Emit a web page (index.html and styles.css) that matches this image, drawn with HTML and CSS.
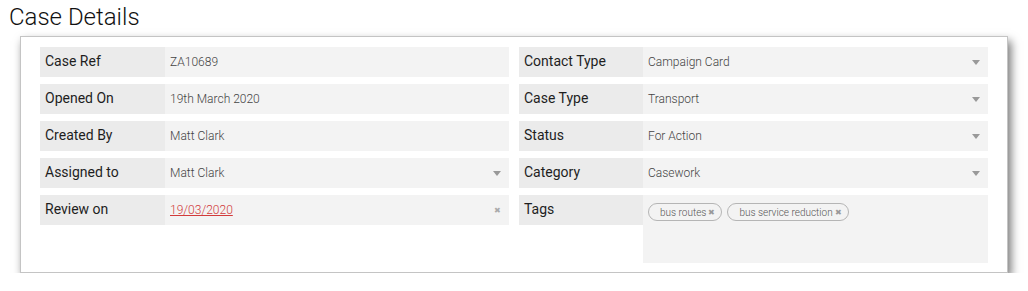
FILE: index.html
```html
<!DOCTYPE html>
<html lang="en">
<head>
    <meta charset="UTF-8">
    <title>Case Details</title>
    <link rel="stylesheet" href="styles.css">
</head>
<body>
    <h1 class="page-title">Case Details</h1>

    <div class="case-card">
        <div class="case-col">
            <div class="field">
                <div class="field-label">Case Ref</div>
                <div class="field-value">ZA10689</div>
            </div>
            <div class="field">
                <div class="field-label">Opened On</div>
                <div class="field-value">19th March 2020</div>
            </div>
            <div class="field">
                <div class="field-label">Created By</div>
                <div class="field-value">Matt Clark</div>
            </div>
            <div class="field">
                <div class="field-label">Assigned to</div>
                <div class="field-value select">Matt Clark <span class="caret"></span></div>
            </div>
            <div class="field">
                <div class="field-label">Review on</div>
                <div class="field-value select"><a class="date-link" href="#">19/03/2020</a> <span class="clear">&#10006;</span></div>
            </div>
        </div>

        <div class="case-col">
            <div class="field">
                <div class="field-label">Contact Type</div>
                <div class="field-value select">Campaign Card <span class="caret"></span></div>
            </div>
            <div class="field">
                <div class="field-label">Case Type</div>
                <div class="field-value select">Transport <span class="caret"></span></div>
            </div>
            <div class="field">
                <div class="field-label">Status</div>
                <div class="field-value select">For Action <span class="caret"></span></div>
            </div>
            <div class="field">
                <div class="field-label">Category</div>
                <div class="field-value select">Casework <span class="caret"></span></div>
            </div>
            <div class="field">
                <div class="field-label">Tags</div>
                <div class="field-value tags">
                    <span class="tag">bus routes <span class="tag-x">&#10006;</span></span>
                    <span class="tag">bus service reduction <span class="tag-x">&#10006;</span></span>
                </div>
            </div>
        </div>
    </div>
</body>
</html>
```

FILE: styles.css
```css
* {
    box-sizing: border-box;
}

body {
    margin: 0;
    padding: 0;
    background: #fff;
    font-family: Roboto, "Liberation Sans", Arial, sans-serif;
    color: #222;
}

.page-title {
    margin: 0;
    padding: 3px 0 0 9px;
    height: 36px;
    font-size: 24px;
    font-weight: 300;
    line-height: 28px;
    color: #111;
}

/* Card holding the two field columns */
.case-card {
    display: flex;
    gap: 10px;
    width: 988px;
    height: 237px;
    margin-left: 20px;
    padding: 10px 19px 9px 19px;
    border: 1px solid #c4c4c4;
    background: #fff;
    box-shadow: 3px 5px 9px rgba(0, 0, 0, 0.55);
}

.case-col {
    flex: 1;
    display: flex;
    flex-direction: column;
    gap: 7px;
}

.field {
    display: flex;
    align-items: flex-start;
}

.field-label {
    width: 125px;
    height: 30px;
    padding: 0 5px;
    line-height: 28px;
    font-size: 14px;
    background: #ebebeb;
    color: #1e1e1e;
}

.case-col + .case-col .field-label {
    width: 124px;
}

.field-value {
    flex: 1;
    height: 30px;
    padding: 0 5px;
    display: flex;
    align-items: center;
    font-size: 12px;
    font-weight: 300;
    color: #444;
    background: #f3f3f3;
}

.select {
    justify-content: space-between;
    padding-right: 8px;
}

.caret {
    width: 0;
    height: 0;
    border-left: 4px solid transparent;
    border-right: 4px solid transparent;
    border-top: 5px solid #999;
}

.clear {
    font-size: 8px;
    color: #aaa;
}

.date-link {
    color: #d23b3b;
    text-decoration: underline;
}

/* Tag chips */
.tags {
    height: 68px;
    align-items: flex-start;
    padding-top: 8px;
    gap: 5px;
}

.tag {
    display: inline-flex;
    align-items: center;
    gap: 2px;
    height: 18px;
    padding: 0 6px 0 11px;
    border: 1px solid #b5b5b5;
    border-radius: 9px;
    font-size: 10px;
    font-weight: 300;
    color: #555;
}

.tag-x {
    font-size: 8px;
    color: #999;
}
```
